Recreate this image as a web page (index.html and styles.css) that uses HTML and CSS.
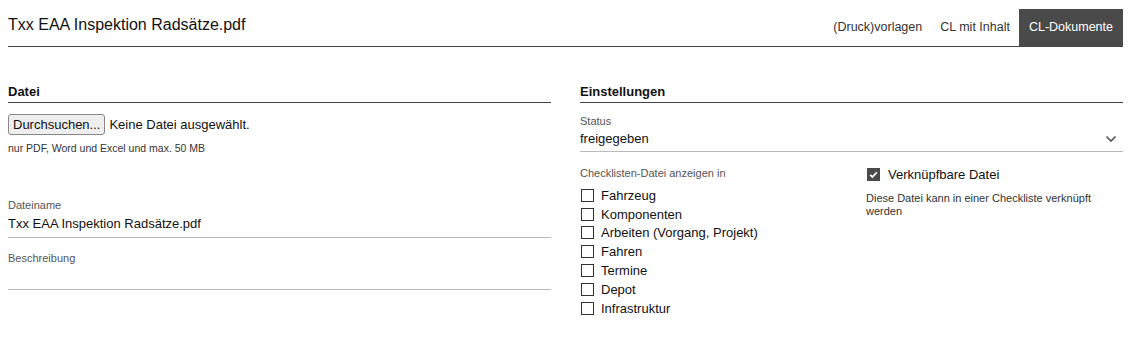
FILE: index.html
```html
<!DOCTYPE html>
<html lang="de">
 <head>
  <title>Txx EAA Inspektion Radsätze.pdf</title>
  <link rel="stylesheet" href="styles.css">
 </head>
 <body>
  <div id="page">
   <div id="head">
    <h1 id="title">Txx EAA Inspektion Radsätze.pdf</h1>
    <div id="tabs">
     <span class="tab">(Druck)vorlagen</span>
     <span class="tab">CL mit Inhalt</span>
     <span class="tab active">CL-Dokumente</span>
    </div>
   </div>

   <div id="cols">
    <div class="col">
     <h2 class="section">Datei</h2>
     <div class="file-row">
      <button type="button" class="browse">Durchsuchen...</button>
      <span class="file-none">Keine Datei ausgewählt.</span>
     </div>
     <div class="hint">nur PDF, Word und Excel und max. 50 MB</div>

     <div class="field name-field">
      <div class="label">Dateiname</div>
      <div class="value">Txx EAA Inspektion Radsätze.pdf</div>
     </div>
     <div class="field desc-field">
      <div class="label">Beschreibung</div>
      <div class="value"></div>
     </div>
    </div>

    <div class="col">
     <h2 class="section">Einstellungen</h2>
     <div class="field status-field">
      <div class="label">Status</div>
      <div class="value select">
       <span>freigegeben</span>
       <svg class="chev" width="12" height="8" viewBox="0 0 12 8"><path d="M1.5 1.5 L6 6 L10.5 1.5" fill="none" stroke="#555" stroke-width="1.6"/></svg>
      </div>
     </div>

     <div class="options">
      <div class="show-in">
       <div class="label">Checklisten-Datei anzeigen in</div>
       <ul class="checks">
        <li><span class="box"></span>Fahrzeug</li>
        <li><span class="box"></span>Komponenten</li>
        <li><span class="box"></span>Arbeiten (Vorgang, Projekt)</li>
        <li><span class="box"></span>Fahren</li>
        <li><span class="box"></span>Termine</li>
        <li><span class="box"></span>Depot</li>
        <li><span class="box"></span>Infrastruktur</li>
       </ul>
      </div>
      <div class="linkable">
       <div class="check-line">
        <span class="box checked"><svg width="13" height="13" viewBox="0 0 13 13"><path d="M3.2 6.8 L5.4 9 L9.8 4.3" fill="none" stroke="#fff" stroke-width="1.8"/></svg></span>
        Verknüpfbare Datei
       </div>
       <div class="note">Diese Datei kann in einer Checkliste verknüpft werden</div>
      </div>
     </div>
    </div>
   </div>
  </div>
 </body>
</html>
```

FILE: styles.css
```css
body {
    margin: 0;
    background: #fff;
    color: #111;
    font-family: "Liberation Sans", Arial, sans-serif;
}

#page {
    width: 1115px;
    margin-left: 8px;
}

#head {
    display: flex;
    justify-content: space-between;
    align-items: flex-end;
    border-bottom: 1px solid #444;
    height: 46px;
}

#title {
    margin: 0 0 11px 0;
    font-size: 16px;
    font-weight: normal;
    line-height: 20px;
}

#tabs {
    display: flex;
}

.tab {
    font-size: 12.5px;
    color: #333;
    padding: 0 9px;
    height: 37px;
    line-height: 37px;
}

.tab.active {
    background: #4a4a4a;
    color: #fff;
    padding: 0 10px;
}

#cols {
    display: grid;
    grid-template-columns: 543px 543px;
    column-gap: 29px;
    margin-top: 36px;
}

.section {
    margin: 0;
    font-size: 13px;
    font-weight: bold;
    line-height: 18px;
    padding-bottom: 1px;
    border-bottom: 1px solid #444;
}

.file-row {
    margin-top: 11px;
    display: flex;
    align-items: center;
    font-size: 13px;
}

.browse {
    font-family: "Liberation Sans", Arial, sans-serif;
    font-size: 13px;
    height: 21px;
    padding: 0 4px;
    margin: 0 4px 0 0;
    border: 1px solid #888;
    border-radius: 3px;
    background: #eee;
    color: #111;
}

.hint {
    margin-top: 7px;
    font-size: 10.5px;
    color: #333;
}

.field {
    border-bottom: 1px solid #bbb;
}

.label {
    font-size: 11px;
    color: #555;
    line-height: 14px;
}

.value {
    font-size: 13px;
    line-height: 16px;
    padding: 4px 0 5px;
    min-height: 16px;
}

.name-field {
    margin-top: 44px;
}

.desc-field {
    margin-top: 13px;
}

.desc-field .value {
    padding: 4px 0;
}

.status-field {
    margin-top: 11px;
}

.status-field .value {
    line-height: 18px;
    padding: 2px 0 3px;
}

.select {
    display: flex;
    justify-content: space-between;
    align-items: center;
}

.chev {
    margin-right: 6px;
}

.options {
    display: grid;
    grid-template-columns: 286px 240px;
    margin-top: 14px;
}

.checks {
    list-style: none;
    margin: 6px 0 0 0;
    padding: 0;
}

.checks li {
    display: flex;
    align-items: center;
    font-size: 13px;
    height: 18.8px;
}

.box {
    display: inline-block;
    box-sizing: border-box;
    width: 13px;
    height: 13px;
    border: 1px solid #333;
    margin: 0 7px 0 1px;
}

.box.checked {
    background: #4a4a4a;
    border-color: #4a4a4a;
    margin-right: 8px;
}

.box.checked svg {
    display: block;
    margin: -1px;
}

.check-line {
    display: flex;
    align-items: center;
    font-size: 13px;
    height: 18px;
    margin-top: -1px;
}

.note {
    margin-top: 9px;
    font-size: 11px;
    line-height: 13px;
    color: #333;
    max-width: 232px;
}
```
